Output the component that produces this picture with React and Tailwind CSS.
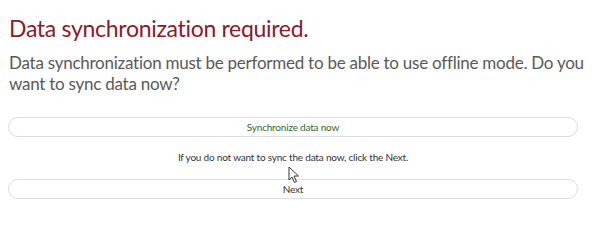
export default function App() {
  return (
    <div className="relative w-[602px] h-[241px] bg-white font-['Lato',sans-serif]">
      <div className="w-[594px] ml-2 pt-[13px]">
        <h1 className="text-[23px] leading-[30px] tracking-[-0.3px] text-[#8b1a2b] pl-[1px]">Data synchronization required.</h1>
        <p className="mt-[9px] text-[17px] leading-[21px] tracking-[-0.25px] text-[#595959] pl-[1px]">
          Data synchronization must be performed to be able to use offline mode. Do you want to sync data now?
        </p>
        <button className="mt-[23px] w-[570px] h-[20px] rounded-full border border-[#ddd] bg-white text-[10px] tracking-[-0.2px] text-[#2e6b2e] leading-none">
          Synchronize data now
        </button>
        <p className="mt-[12px] w-[570px] text-center text-[10px] tracking-[-0.2px] text-[#333] leading-[16px]">
          If you do not want to sync the data now, click the Next.
        </p>
        <button className="mt-[14px] w-[570px] h-[20px] rounded-full border border-[#ddd] bg-white text-[10px] tracking-[-0.2px] text-[#333] leading-none">
          Next
        </button>
      </div>
      <svg className="absolute left-[288px] top-[166px]" width="12" height="18" viewBox="0 0 12 18">
        <path d="M1 1 L1 14 L4 11 L6.5 16.5 L8.5 15.5 L6 10 L10.5 10 Z" fill="white" stroke="#333" strokeWidth="1" strokeLinejoin="round" />
      </svg>
    </div>
  )
}
